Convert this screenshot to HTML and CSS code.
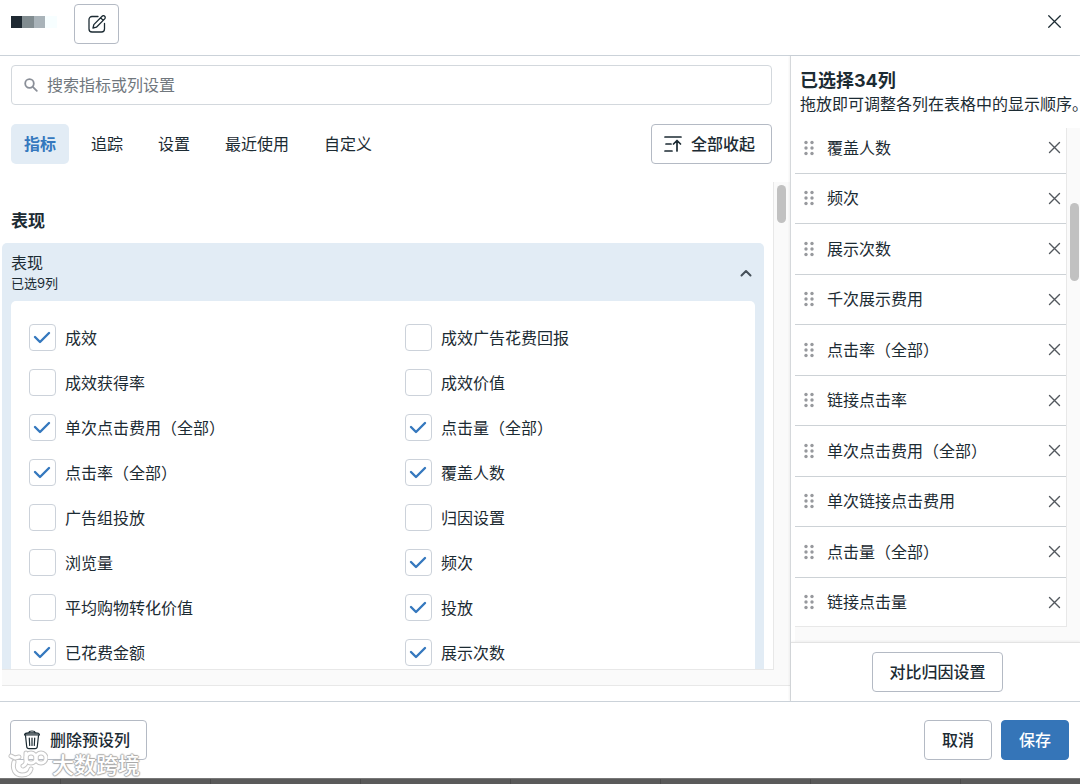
FILE: index.html
```html
<!DOCTYPE html>
<html lang="zh-CN">
<head>
<meta charset="utf-8">
<meta name="viewport" content="width=device-width, initial-scale=1">
<title>自定义列</title>
<link rel="stylesheet" href="styles.css">
</head>
<body>
<svg class="sprite" aria-hidden="true">
  <symbol id="check" viewBox="0 0 27 27"><path d="M6 13l5 5 9-9"/></symbol>
  <symbol id="x" viewBox="0 0 13 13"><path d="M1.500 1.500l10 10M11.500 1.500l-10 10"/></symbol>
  <symbol id="grip" viewBox="0 0 10 16"><circle cx="2" cy="2.500" r="1.700"/><circle cx="8" cy="2.500" r="1.700"/><circle cx="2" cy="8" r="1.700"/><circle cx="8" cy="8" r="1.700"/><circle cx="2" cy="13.500" r="1.700"/><circle cx="8" cy="13.500" r="1.700"/></symbol>
</svg>
<div class="dialog">
  <header class="header">
    <div class="preset-name" aria-hidden="true"><i class="px px-dark"></i><i class="px px-mid"></i><i class="px px-soft"></i><i class="px px-pale"></i></div>
    <button class="btn btn-icon" type="button" aria-label="编辑名称">
      <svg class="icon-edit" viewBox="0 0 18 18"><path d="M10 1.500H4A3 3 0 0 0 1 4.500V14a3 3 0 0 0 3 3h9.500a3 3 0 0 0 3-3V8.500M5 13l.8-3.400 8.300-8.300a1.800 1.800 0 0 1 2.600 2.600l-8.300 8.300zM12.600 2.800l2.600 2.600"/></svg>
    </button>
    <button class="close" type="button" aria-label="关闭"><svg class="icon-close" viewBox="0 0 13 13"><use href="#x"/></svg></button>
  </header>

  <main class="content">
    <section class="picker">
      <label class="search">
        <svg class="icon-search" viewBox="0 0 14 14"><circle cx="5.500" cy="5.500" r="4.300"/><path d="M8.800 8.800l4 4"/></svg>
        <input class="search-input" type="text" placeholder="搜索指标或列设置" aria-label="搜索指标或列设置">
      </label>
      <div class="toolbar">
        <nav class="tabs">
          <button class="tab tab-active" type="button">指标</button>
          <button class="tab" type="button">追踪</button>
          <button class="tab" type="button">设置</button>
          <button class="tab" type="button">最近使用</button>
          <button class="tab" type="button">自定义</button>
        </nav>
        <button class="btn btn-collapse" type="button">
          <svg class="icon-collapse" viewBox="0 0 18 18"><path d="M1 2h16M2 9h5M1 16h7M13 16V6M9.500 9L13 5.500 16.500 9"/></svg>全部收起
        </button>
      </div>

      <div class="pane">
        <div class="pane-view">
          <h2 class="group-title">表现</h2>
          <div class="card">
            <div class="card-head">
              <div>
                <h3 class="card-title">表现</h3>
                <p class="card-note">已选9列</p>
              </div>
              <button class="toggle" type="button" aria-label="收起"><svg class="icon-chevron" viewBox="0 0 12 8"><path d="M1.500 6.500L6 2l4.500 4.500"/></svg></button>
            </div>
            <div class="options">
              <label class="option"><input class="box" type="checkbox" checked><svg class="tick"><use href="#check"/></svg>成效</label>
              <label class="option"><input class="box" type="checkbox"><svg class="tick"><use href="#check"/></svg>成效广告花费回报</label>
              <label class="option"><input class="box" type="checkbox"><svg class="tick"><use href="#check"/></svg>成效获得率</label>
              <label class="option"><input class="box" type="checkbox"><svg class="tick"><use href="#check"/></svg>成效价值</label>
              <label class="option"><input class="box" type="checkbox" checked><svg class="tick"><use href="#check"/></svg>单次点击费用（全部）</label>
              <label class="option"><input class="box" type="checkbox" checked><svg class="tick"><use href="#check"/></svg>点击量（全部）</label>
              <label class="option"><input class="box" type="checkbox" checked><svg class="tick"><use href="#check"/></svg>点击率（全部）</label>
              <label class="option"><input class="box" type="checkbox" checked><svg class="tick"><use href="#check"/></svg>覆盖人数</label>
              <label class="option"><input class="box" type="checkbox"><svg class="tick"><use href="#check"/></svg>广告组投放</label>
              <label class="option"><input class="box" type="checkbox"><svg class="tick"><use href="#check"/></svg>归因设置</label>
              <label class="option"><input class="box" type="checkbox"><svg class="tick"><use href="#check"/></svg>浏览量</label>
              <label class="option"><input class="box" type="checkbox" checked><svg class="tick"><use href="#check"/></svg>频次</label>
              <label class="option"><input class="box" type="checkbox"><svg class="tick"><use href="#check"/></svg>平均购物转化价值</label>
              <label class="option"><input class="box" type="checkbox" checked><svg class="tick"><use href="#check"/></svg>投放</label>
              <label class="option"><input class="box" type="checkbox" checked><svg class="tick"><use href="#check"/></svg>已花费金额</label>
              <label class="option"><input class="box" type="checkbox" checked><svg class="tick"><use href="#check"/></svg>展示次数</label>
            </div>
          </div>
        </div>
        <div class="track"><div class="thumb"></div></div>
      </div>
    </section>

    <aside class="selected">
      <div class="selected-head">
        <h2 class="selected-title">已选择34列</h2>
        <p class="selected-note">拖放即可调整各列在表格中的显示顺序。</p>
      </div>
      <div class="list-pane">
        <div class="list-view">
          <ul class="list">
            <li class="item"><svg class="grip"><use href="#grip"/></svg><span class="item-name">覆盖人数</span><button class="remove" type="button" aria-label="移除"><svg class="icon-x"><use href="#x"/></svg></button></li>
            <li class="item"><svg class="grip"><use href="#grip"/></svg><span class="item-name">频次</span><button class="remove" type="button" aria-label="移除"><svg class="icon-x"><use href="#x"/></svg></button></li>
            <li class="item"><svg class="grip"><use href="#grip"/></svg><span class="item-name">展示次数</span><button class="remove" type="button" aria-label="移除"><svg class="icon-x"><use href="#x"/></svg></button></li>
            <li class="item"><svg class="grip"><use href="#grip"/></svg><span class="item-name">千次展示费用</span><button class="remove" type="button" aria-label="移除"><svg class="icon-x"><use href="#x"/></svg></button></li>
            <li class="item"><svg class="grip"><use href="#grip"/></svg><span class="item-name">点击率（全部）</span><button class="remove" type="button" aria-label="移除"><svg class="icon-x"><use href="#x"/></svg></button></li>
            <li class="item"><svg class="grip"><use href="#grip"/></svg><span class="item-name">链接点击率</span><button class="remove" type="button" aria-label="移除"><svg class="icon-x"><use href="#x"/></svg></button></li>
            <li class="item"><svg class="grip"><use href="#grip"/></svg><span class="item-name">单次点击费用（全部）</span><button class="remove" type="button" aria-label="移除"><svg class="icon-x"><use href="#x"/></svg></button></li>
            <li class="item"><svg class="grip"><use href="#grip"/></svg><span class="item-name">单次链接点击费用</span><button class="remove" type="button" aria-label="移除"><svg class="icon-x"><use href="#x"/></svg></button></li>
            <li class="item"><svg class="grip"><use href="#grip"/></svg><span class="item-name">点击量（全部）</span><button class="remove" type="button" aria-label="移除"><svg class="icon-x"><use href="#x"/></svg></button></li>
            <li class="item"><svg class="grip"><use href="#grip"/></svg><span class="item-name">链接点击量</span><button class="remove" type="button" aria-label="移除"><svg class="icon-x"><use href="#x"/></svg></button></li>
          </ul>
        </div>
        <div class="track track-list"><div class="thumb thumb-list"></div></div>
      </div>
      <div class="compare"><button class="btn btn-wide" type="button">对比归因设置</button></div>
    </aside>
  </main>

  <footer class="footer">
    <button class="btn btn-delete" type="button">
      <svg class="icon-trash" viewBox="0 0 18 20"><path class="trash-lid" d="M1.500 5h15C16.500 3.300 15 2.800 12 2.800H6C3 2.800 1.500 3.300 1.500 5z"/><path d="M6 2.800C6 1.400 7 1 9 1s3 .4 3 1.800M2.500 5.500l1.200 11A2.300 2.300 0 0 0 6 18.600h6a2.300 2.300 0 0 0 2.300-2.100l1.200-11M6.300 8l.4 7.500M9 8v7.500M11.700 8l-.4 7.500"/></svg>删除预设列
    </button>
    <div class="actions">
      <button class="btn" type="button">取消</button>
      <button class="btn btn-primary" type="button">保存</button>
    </div>
    <div class="watermark">
      <svg class="watermark-logo" viewBox="0 0 40 28">
        <g class="wm-edge"><path d="M3 6l4 2 4-1M6 12c-2 7 1 13 8 13 5 0 8-2 9-6M18 3v9c0 2-1 3-3 4"/><circle cx="23" cy="8" r="5"/><circle cx="33" cy="8" r="5"/></g>
        <g class="wm-fill"><path d="M3 6l4 2 4-1M6 12c-2 7 1 13 8 13 5 0 8-2 9-6M18 3v9c0 2-1 3-3 4"/><circle cx="23" cy="8" r="5"/><circle cx="33" cy="8" r="5"/></g>
      </svg>
      <span class="watermark-text">大数跨境</span>
    </div>
  </footer>
  <div class="backdrop"></div>
</div>
</body>
</html>
```
FILE: styles.css
```css
* { box-sizing: border-box; }

body, h2, h3, p, ul { margin: 0; padding: 0; }

body {
  font-family: Inter, "Noto Sans CJK SC", sans-serif;
  font-size: 16px;
  line-height: 20px;
  color: #1c2b33;
  background: #fff;
}

button, input { font: inherit; color: inherit; }

button { cursor: pointer; white-space: nowrap; }

svg {
  flex: none;
  fill: none;
  stroke: currentColor;
  stroke-linecap: round;
  stroke-linejoin: round;
}

.sprite { position: absolute; width: 0; height: 0; }

.dialog {
  display: flex;
  flex-direction: column;
  height: 100vh;
  overflow: hidden;
}

.btn {
  display: inline-flex;
  align-items: center;
  justify-content: center;
  height: 40px;
  padding: 0 17px;
  border: 1px solid #b4bac4;
  border-radius: 4px;
  background: #fff;
  font-weight: 500;
}

/* Header */
.header {
  display: flex;
  align-items: center;
  gap: 17px;
  height: 56px;
  padding: 0 18px 8px 11px;
  border-bottom: 1px solid #cbd2d9;
}

.preset-name { display: flex; padding-bottom: 4px; }
.px { width: 11px; height: 12px; }
.px-dark { background: #1e2932; }
.px-mid { width: 12px; background: #818c90; }
.px-soft { background: #a9b3b9; }
.px-pale { width: 12px; background: #f7feff; }

.btn-icon { width: 45px; padding: 0; }
.icon-edit { width: 18px; height: 18px; stroke-width: 1.3; }

.close, .toggle, .remove {
  display: flex;
  padding: 0;
  border: 0;
  background: none;
}

.close { margin-left: auto; padding-bottom: 4px; }
.icon-close { width: 15px; height: 15px; stroke-width: 1.1; }

/* Body */
.content {
  display: grid;
  grid-template-columns: minmax(0, 1fr) 290px;
  flex: 1;
  min-height: 0;
}

.picker {
  display: flex;
  flex-direction: column;
  min-height: 0;
  padding: 9px 0 15px 2px;
}

.search {
  display: flex;
  align-items: center;
  gap: 9px;
  height: 40px;
  margin: 0 18px 0 9px;
  padding: 0 12px;
  border: 1px solid #d3d8dd;
  border-radius: 4px;
}

.icon-search { width: 14px; height: 14px; color: #8a8f98; stroke-width: 1.8; }

.search-input {
  flex: 1;
  min-width: 0;
  padding: 0;
  border: 0;
  outline: 0;
  background: none;
}

.search-input::placeholder { color: #70777d; opacity: 1; }

.toolbar {
  display: flex;
  justify-content: space-between;
  margin: 19px 18px 18px 9px;
}

.tabs { display: flex; gap: 9px; }

.tab {
  height: 40px;
  padding: 0 13px;
  border: 0;
  border-radius: 5px;
  background: none;
}

.tab-active {
  background: #e2ecf5;
  color: #3578be;
  font-weight: 700;
}

.btn-collapse { gap: 9px; padding: 0 16px 0 12px; }
.icon-collapse { width: 18px; height: 18px; stroke-width: 1.7; }

.pane {
  display: flex;
  flex: 1;
  min-height: 0;
  padding-bottom: 15px;
  border-bottom: 1px solid #e8e8e8;
  background: #fafafa;
}

.pane-view {
  flex: 1;
  overflow: hidden;
  padding-right: 9px;
  border-right: 1px solid #e8e8e8;
  border-bottom: 1px solid #e8e8e8;
  background: #fff;
}

.track {
  width: 16px;
  padding: 3px;
  background: #fafafa;
}

.thumb {
  width: 9px;
  height: 38px;
  border-radius: 5px;
  background: #c1c1c1;
}

.group-title {
  padding: 29px 9px 12px;
  font-size: 17px;
  line-height: 20px;
  font-weight: 700;
}

.card {
  padding: 0 9px 9px;
  border-radius: 5px;
  background: #e2ecf5;
}

.card-head {
  display: flex;
  align-items: center;
  justify-content: space-between;
  height: 58px;
  padding: 1px 3px 0 0;
}

.card-title { font-size: 16px; line-height: 20px; font-weight: 400; }
.card-note { font-size: 13px; line-height: 20px; }
.icon-chevron { width: 12px; height: 8px; color: #465059; stroke-width: 2; }

.options {
  display: grid;
  grid-template-columns: 1fr 1fr;
  grid-auto-rows: 45px;
  padding: 14px 0 14px 18px;
  column-gap: 26px;
  border-radius: 5px;
  background: #fff;
}

.option {
  display: grid;
  grid-template-columns: 27px 1fr;
  align-items: center;
  column-gap: 9px;
}

.box {
  grid-area: 1 / 1;
  appearance: none;
  width: 27px;
  height: 27px;
  margin: 0;
  border: 1px solid #ccd2da;
  border-radius: 4px;
  background: #fff;
}

.tick {
  grid-area: 1 / 1;
  z-index: 1;
  width: 27px;
  height: 27px;
  color: #3578be;
  stroke-width: 2.4;
  visibility: hidden;
  pointer-events: none;
}

.box:checked + .tick { visibility: visible; }

/* Selected columns */
.selected {
  display: flex;
  flex-direction: column;
  min-width: 0;
  min-height: 0;
  border-left: 1px solid #d5d8db;
  box-shadow: -1px 0 2px #0000000d;
}

.selected-head { padding: 14px 0 14px 9px; }
.selected-title { font-size: 18px; line-height: 22px; font-weight: 700; }

.selected-note {
  font-family: "Noto Sans CJK SC", sans-serif;
  font-feature-settings: "halt";
  line-height: 22px;
  white-space: nowrap;
}

.list-pane {
  display: flex;
  flex: 1;
  min-height: 0;
  margin-left: 4px;
  padding-bottom: 15px;
  background: #fafafa;
}

.list-view {
  display: flex;
  flex: 1;
  overflow: hidden;
  border-right: 1px solid #e8e8e8;
  border-bottom: 1px solid #e8e8e8;
  background: #fff;
}

.list {
  display: flex;
  flex: 1;
  flex-direction: column;
  margin: -5px 0 -2px;
  list-style: none;
}

.item {
  display: flex;
  flex: 1;
  align-items: center;
  gap: 13px;
  padding: 0 5px 0 9px;
  border-bottom: 1px solid #cdd2d6;
}

.item-name { flex: 1; }
.grip { width: 10px; height: 16px; fill: #97999d; stroke: none; }
.icon-x { width: 13px; height: 13px; color: #53585e; stroke-width: 1.4; }
.track-list { width: 13px; padding: 75px 0 0 3px; }
.thumb-list { height: 78px; }

.compare {
  display: flex;
  justify-content: center;
  padding: 9px 0 9px 4px;
  border-top: 1px solid #e3e3e3;
  box-shadow: 0 -1px 2px #0000000d;
}

.btn-wide { padding: 0 16px; }

/* Footer */
.footer {
  position: relative;
  display: flex;
  align-items: flex-start;
  justify-content: space-between;
  height: 77px;
  padding: 18px 11px 0 10px;
  border-top: 1px solid #cbd2d9;
}

.actions { display: flex; gap: 9px; }
.btn-delete { gap: 9px; padding: 0 16px 0 12px; }
.icon-trash { width: 18px; height: 20px; stroke-width: 1.2; }
.trash-lid { fill: #a5aaad; }
.btn-primary { border-color: #3575b8; background: #3575b8; color: #fff; }

.watermark {
  position: absolute;
  left: 8px;
  bottom: 0;
  display: flex;
  align-items: flex-end;
  gap: 4px;
}

.watermark-logo { width: 40px; height: 28px; }
.wm-edge { stroke: #c4c4c4; stroke-width: 5; }
.wm-fill { stroke: #fff; stroke-width: 3; }

.watermark-text {
  color: #fff;
  font-size: 22px;
  line-height: 26px;
  font-weight: 500;
  text-shadow: 1px 0 1px #aaa, -1px 0 1px #aaa, 0 1px 1px #aaa, 0 -1px 1px #aaa;
}

.backdrop {
  height: 6px;
  border-top: 1px solid #777;
  background: repeating-linear-gradient(90deg, #5a5a5a 0 60px, #4b4b4b 60px 61px, #5a5a5a 61px 150px);
}
```
